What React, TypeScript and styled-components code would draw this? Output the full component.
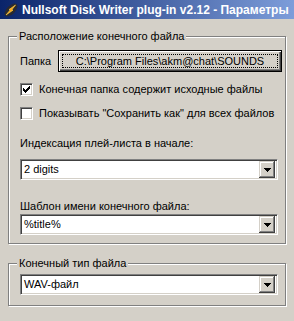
import React from 'react';
import styled, { createGlobalStyle } from 'styled-components';

const GlobalStyle = createGlobalStyle`
  html, body {
    margin: 0;
    padding: 0;
    background: #d4d0c8;
  }
  body {
    font-family: "Liberation Sans", Arial, sans-serif;
    font-size: 11px;
    color: #000;
  }
`;

const Window = styled.div`
  width: 294px;
  height: 321px;
  background: #d4d0c8;
  display: flex;
  flex-direction: column;
  overflow: hidden;
`;

const TitleBar = styled.div`
  height: 19px;
  flex-shrink: 0;
  display: flex;
  align-items: center;
  gap: 3px;
  padding-left: 3px;
  background: linear-gradient(to right, #0a246a, #7d9dda);
  color: #fff;
  font-weight: bold;
  font-size: 12px;
  white-space: nowrap;
`;

const Content = styled.div`
  display: flex;
  flex-direction: column;
  gap: 19px;
  padding: 17px 8px 0 8px;
`;

const GroupBox = styled.div<{ $pad: string }>`
  position: relative;
  border: 1px solid #808080;
  box-shadow: inset 1px 1px 0 #fff, 1px 1px 0 #fff;
  padding: ${({ $pad }) => $pad};
  display: flex;
  flex-direction: column;
`;

const Legend = styled.span`
  position: absolute;
  top: -7px;
  left: 8px;
  padding: 0 2px;
  line-height: 13px;
  background: #d4d0c8;
`;

const Row = styled.div<{ $mt?: number }>`
  display: flex;
  align-items: center;
  margin-top: ${({ $mt }) => $mt ?? 0}px;
`;

const PathLabel = styled.span`
  width: 38px;
  flex-shrink: 0;
`;

const Label = styled.div<{ $mt?: number }>`
  line-height: 13px;
  margin-top: ${({ $mt }) => $mt ?? 0}px;
`;

const PathButton = styled.button`
  width: 224px;
  height: 22px;
  padding: 0;
  font: inherit;
  color: #000;
  background: #d4d0c8;
  border: 1px solid #000;
  box-shadow: inset 1px 1px 0 #fff, inset -1px -1px 0 #404040, inset -2px -2px 0 #808080;
  position: relative;
  display: flex;
  align-items: center;
  justify-content: center;
  white-space: nowrap;

  &::after {
    content: '';
    position: absolute;
    inset: 3px;
    border: 1px dotted #000;
  }
`;

const CheckBox = styled.span`
  width: 13px;
  height: 13px;
  box-sizing: border-box;
  flex-shrink: 0;
  background: #fff;
  border-top: 1px solid #808080;
  border-left: 1px solid #808080;
  border-bottom: 1px solid #fff;
  border-right: 1px solid #fff;
  box-shadow: inset 1px 1px 0 #404040, inset -1px -1px 0 #d4d0c8;
  display: flex;
  align-items: center;
  justify-content: center;
`;

const CheckText = styled.span`
  margin-left: 6px;
  line-height: 13px;
  white-space: nowrap;
`;

const Combo = styled.div<{ $mt?: number }>`
  margin-top: ${({ $mt }) => $mt ?? 0}px;
  margin-right: 7px;
  height: 21px;
  box-sizing: border-box;
  background: #fff;
  border-top: 1px solid #808080;
  border-left: 1px solid #808080;
  border-bottom: 1px solid #fff;
  border-right: 1px solid #fff;
  box-shadow: inset 1px 1px 0 #404040, inset -1px -1px 0 #d4d0c8;
  display: flex;
  align-items: center;
  padding: 2px 2px 2px 3px;
`;

const ComboText = styled.span`
  flex: 1;
  line-height: 13px;
`;

const DropButton = styled.span`
  width: 16px;
  height: 17px;
  box-sizing: border-box;
  background: #d4d0c8;
  box-shadow: inset -1px -1px 0 #404040, inset 1px 1px 0 #d4d0c8,
    inset -2px -2px 0 #808080, inset 2px 2px 0 #fff;
  display: flex;
  align-items: center;
  justify-content: center;
`;

const AppIcon = () => (
  <svg width="16" height="16" viewBox="0 0 16 16">
    <ellipse cx="8" cy="8" rx="8" ry="4.2" transform="rotate(-45 8 8)" fill="#2a2a30" />
    <path d="M3 13 L7 8.2 L6 7.6 L12.5 3 L9 7.6 L10 8.2 Z" fill="#f7a21b" stroke="#ffd24a" strokeWidth="0.6" />
  </svg>
);

const CheckMark = () => (
  <svg width="7" height="7" viewBox="0 0 7 7" shapeRendering="crispEdges">
    <path d="M0 2h1v3h-1zM1 3h1v3h-1zM2 4h1v3h-1zM3 3h1v3h-1zM4 2h1v3h-1zM5 1h1v3h-1zM6 0h1v3h-1z" fill="#000" />
  </svg>
);

const Arrow = () => (
  <svg width="7" height="4" viewBox="0 0 7 4" shapeRendering="crispEdges">
    <path d="M0 0h7v1h-7zM1 1h5v1h-5zM2 2h3v1h-3zM3 3h1v1h-1z" fill="#000" />
  </svg>
);

const ComboBox = ({ value, mt }: { value: string; mt?: number }) => (
  <Combo $mt={mt}>
    <ComboText>{value}</ComboText>
    <DropButton>
      <Arrow />
    </DropButton>
  </Combo>
);

const App = () => {
  return (
    <>
      <GlobalStyle />
      <Window>
        <TitleBar>
          <AppIcon />
          <span>Nullsoft Disk Writer plug-in v2.12 - Параметры</span>
        </TitleBar>
        <Content>
          <GroupBox $pad="13px 0 8px 11px">
            <Legend>Расположение конечного файла</Legend>
            <Row>
              <PathLabel>Папка</PathLabel>
              <PathButton>C:\Program Files\akm@chat\SOUNDS</PathButton>
            </Row>
            <Row $mt={11}>
              <CheckBox>
                <CheckMark />
              </CheckBox>
              <CheckText>Конечная папка содержит исходные файлы</CheckText>
            </Row>
            <Row $mt={11}>
              <CheckBox />
              <CheckText>Показывать "Сохранить как" для всех файлов</CheckText>
            </Row>
            <Label $mt={17}>Индексация плей-листа в начале:</Label>
            <ComboBox value="2 digits" mt={9} />
            <Label $mt={20}>Шаблон имени конечного файла:</Label>
            <ComboBox value="%title%" mt={1} />
          </GroupBox>
          <GroupBox $pad="10px 0 10px 11px">
            <Legend>Конечный тип файла</Legend>
            <ComboBox value="WAV-файл" />
          </GroupBox>
        </Content>
      </Window>
    </>
  );
};

export default App;
